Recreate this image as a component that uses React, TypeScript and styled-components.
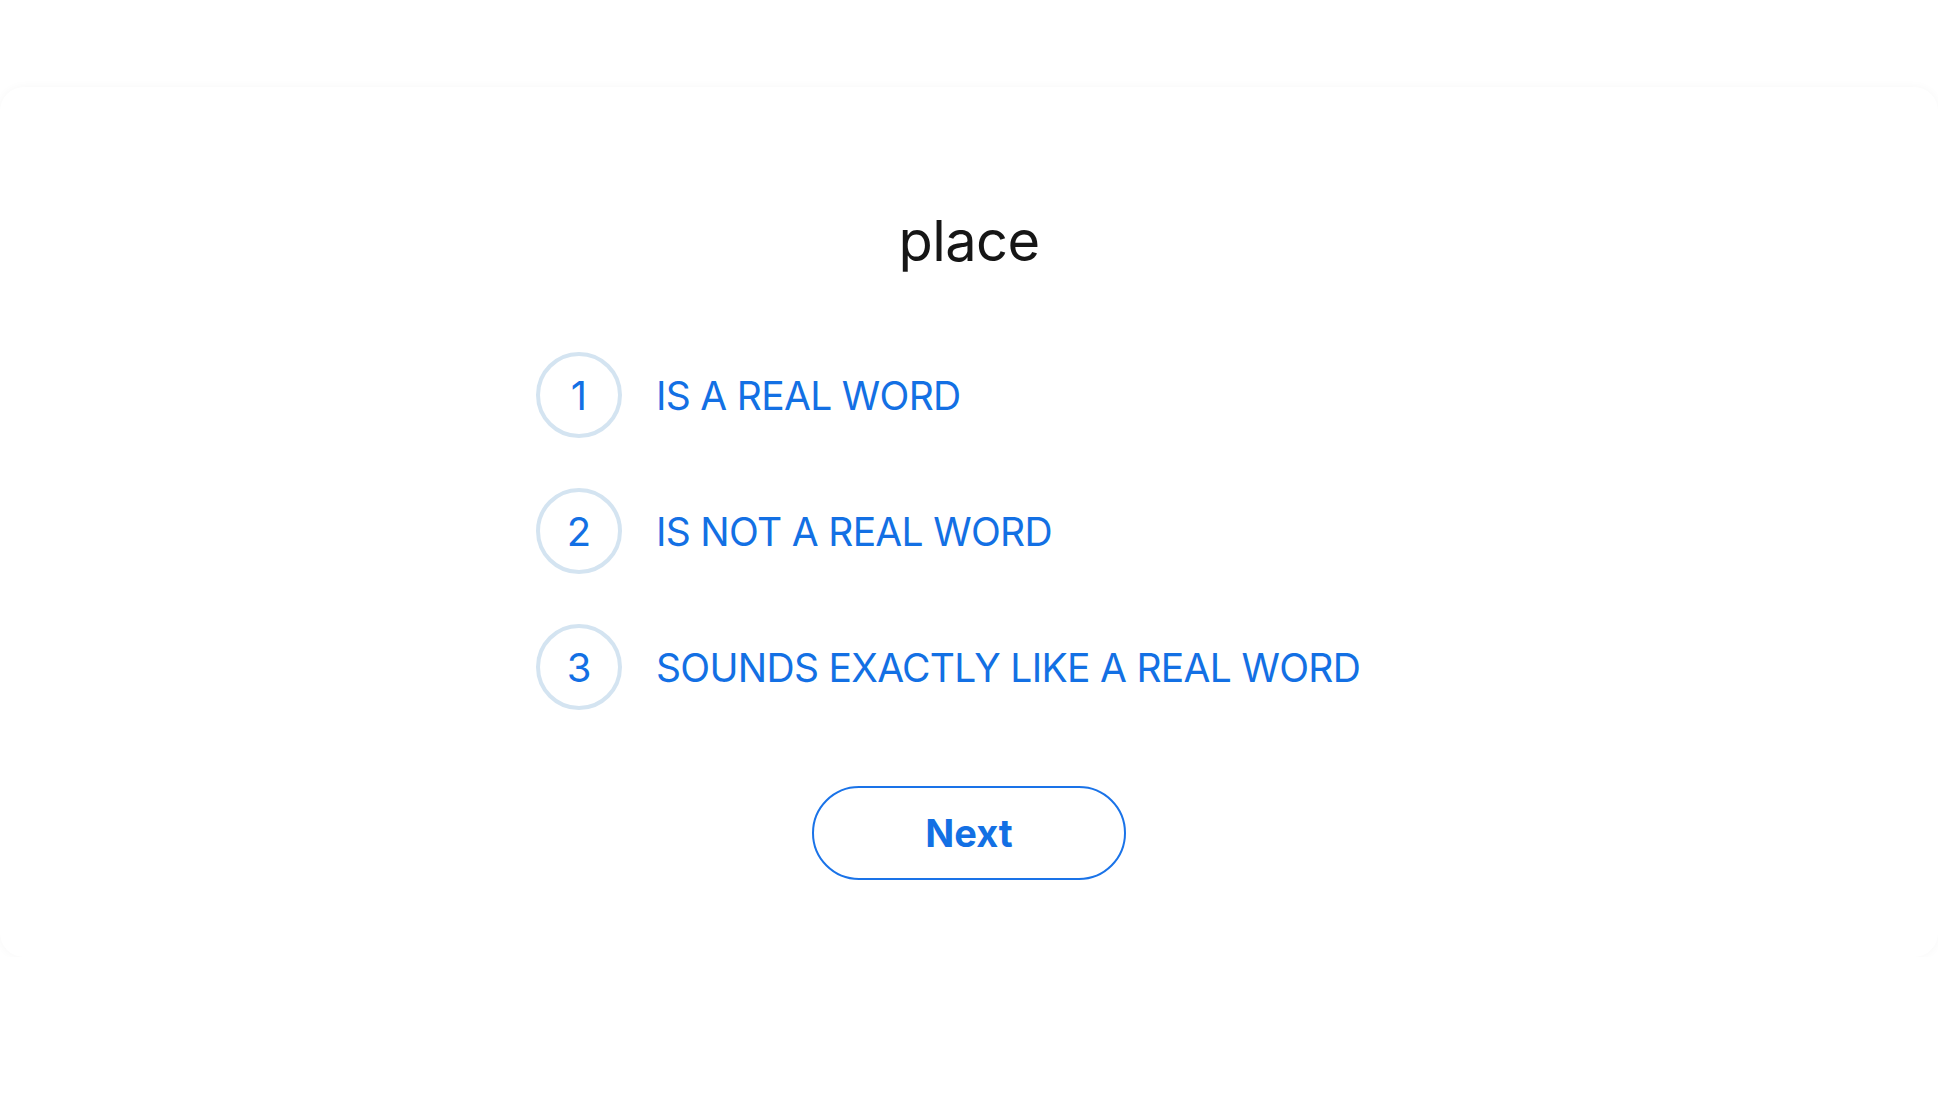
import styled, { createGlobalStyle } from "styled-components";

const GlobalStyle = createGlobalStyle`
  body {
    margin: 0;
    background: #ffffff;
    font-family: Inter, "Noto Sans", sans-serif;
  }
`;

const options = ["IS A REAL WORD", "IS NOT A REAL WORD", "SOUNDS EXACTLY LIKE A REAL WORD"];

export default function App() {
  return (
    <>
      <GlobalStyle />
      <Card>
        <Word>place</Word>
        <OptionList>
          {options.map((label, i) => (
            <Option key={label}>
              <Badge>{i + 1}</Badge>
              <Label>{label}</Label>
            </Option>
          ))}
        </OptionList>
        <NextButton>Next</NextButton>
      </Card>
    </>
  );
}

const Card = styled.div`
  margin-top: 87px;
  height: 870px;
  box-sizing: border-box;
  padding-top: 119px;
  background: #fff;
  border-radius: 24px;
  box-shadow: 0 0 10px rgba(0, 0, 0, 0.035);
  display: flex;
  flex-direction: column;
  align-items: center;
`;

const Word = styled.div`
  font-size: 56px;
  line-height: 70px;
  letter-spacing: -0.6px;
  color: #161616;
  font-weight: 400;
`;

const OptionList = styled.div`
  width: 866px;
  margin-top: 76px;
  display: flex;
  flex-direction: column;
  gap: 50px;
`;

const Option = styled.div`
  display: flex;
  align-items: center;
  gap: 34px;
`;

const Badge = styled.div`
  width: 86px;
  height: 86px;
  box-sizing: border-box;
  border: 4px solid #d4e4f1;
  border-radius: 50%;
  display: flex;
  align-items: center;
  justify-content: center;
  color: #1370e4;
  font-size: 40px;
`;

const Label = styled.div`
  color: #1370e4;
  font-size: 39px;
  letter-spacing: -0.7px;
`;

const NextButton = styled.button`
  margin-top: 76px;
  width: 314px;
  height: 94px;
  border: 2px solid #1a73e8;
  border-radius: 47px;
  background: #fff;
  color: #1370e4;
  font-family: Inter, "Noto Sans", sans-serif;
  font-size: 38px;
  font-weight: 700;
  cursor: pointer;
`;
